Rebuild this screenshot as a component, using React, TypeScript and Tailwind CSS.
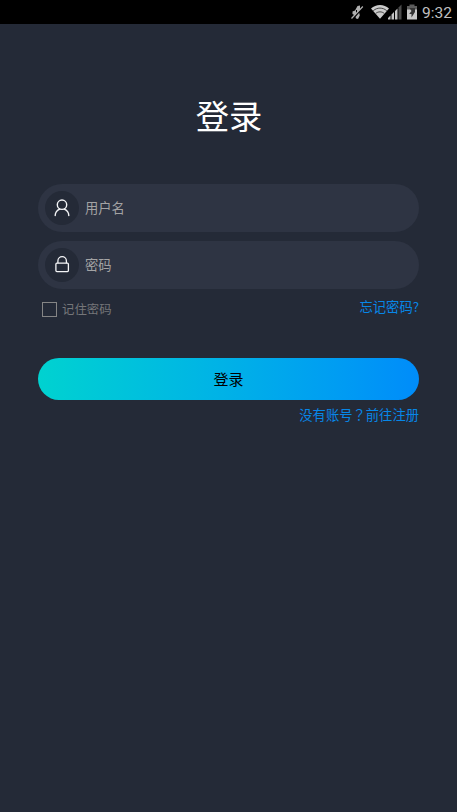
import React, { useState } from 'react';

interface FieldProps {
    icon: React.ReactNode;
    type: string;
    placeholder: string;
    value: string;
    onChange: (value: string) => void;
}

const UserIcon = () => (
    <svg width="34" height="34" viewBox="0 0 34 34" fill="none" stroke="#f4f5f7" strokeWidth="1.4" strokeLinecap="round">
        <circle cx="17" cy="13.7" r="4.7" />
        <path d="M10.2 24.6c.1-3.100 1.900-5.400 4.600-6.400M23.800 24.600c-.1-3.100-1.900-5.400-4.600-6.400" />
    </svg>
);

const LockIcon = () => (
    <svg width="34" height="34" viewBox="0 0 34 34" fill="none" stroke="#f4f5f7" strokeWidth="1.3">
        <rect x="10.9" y="15.200" width="12.500" height="8.400" rx="1" />
        <path d="M12.900 15.200v-2.300a4.250 4.250 0 0 1 8.500 0v2.300" />
    </svg>
);

const StatusBar = () => (
    <div className="flex h-6 items-center justify-end bg-black pr-[5px]">
        {/* Muted ringer */}
        <svg className="mr-[6px]" width="15" height="18" viewBox="0 0 15 18" fill="none">
            <path d="M2.500 8.500 5 7.500 7.500 3l2.500-.5v4.500l-1 2 .8 3.500-1.800 3.500-2-.5-1-3-2.500-1.500z" fill="#b0b0b0" />
            <path d="M6.500 7v4" stroke="#000" strokeWidth="1" />
            <path d="M2.200 16.500 13 4.500" stroke="#000" strokeWidth="1.500" />
            <path d="M1.500 15.500 12.800 3.500" stroke="#b0b0b0" strokeWidth="1.200" />
        </svg>
        {/* Wifi */}
        <svg width="18" height="18" viewBox="0 0 18 18">
            <path d="M9 15.800 0 5.500C2.500 3.200 5.600 2 9 2s6.500 1.200 9 3.500z" fill="#cbcbcb" />
            <path d="M2.200 7.800c3.800-3.600 9.800-3.600 13.600 0M4.700 10.500c2.400-2.200 6.200-2.200 8.600 0" fill="none" stroke="#222" strokeWidth=".8" />
        </svg>
        {/* Cell signal */}
        <svg className="-ml-px mr-[5px]" width="14" height="18" viewBox="0 0 14 18">
            <path d="M0 16.500v-1.500l2.500-2.500v4zM3.500 16.500v-5L6 9v7.500zM7 16.500v-8.500L9.500 5.500v11z" fill="#c4c4c4" />
            <path d="M10.500 16.500v-12L13.500 1.500v15z" fill="#4c4c4c" />
        </svg>
        {/* Battery */}
        <svg className="mr-[5px]" width="10" height="18" viewBox="0 0 10 18">
            <path d="M0 3h2.500V1.500h5V3H10v4H0z" fill="#5c5c5c" />
            <path d="M0 6.500h10v10H0z" fill="#c8c8c8" />
            <path d="M2.500 5h5.500v4L4.500 14.500V11H2.200L4.500 8z" fill="#333" />
        </svg>
        <span className="mt-[2px] font-[Roboto,sans-serif] text-[15.500px] leading-6 text-[#c0c0c0]">9:32</span>
    </div>
);

const Field: React.FC<FieldProps> = ({ icon, type, placeholder, value, onChange }) => (
    <label className="flex h-12 items-center rounded-full bg-[#2e3443] pl-[7px] pr-5">
        <span className="flex size-[34px] shrink-0 items-center justify-center rounded-full bg-[#242a37]">{icon}</span>
        <input
            type={type}
            value={value}
            placeholder={placeholder}
            onChange={e => onChange(e.target.value)}
            className="ml-[6px] h-full min-w-0 flex-1 bg-transparent pb-[2px] text-[13.300px] text-white outline-none placeholder:text-[#a3a3a4]"
        />
    </label>
);

const App: React.FC = () => {
    const [username, setUsername] = useState('');
    const [password, setPassword] = useState('');
    const [remember, setRemember] = useState(false);

    return (
        <div className="min-h-screen bg-[#242a37] font-['Noto_Sans_CJK_SC',sans-serif]">
            <StatusBar />
            <form className="flex flex-col px-[38px]" onSubmit={e => e.preventDefault()}>
                <h1 className="mt-[66px] pl-px text-center text-[33.300px] leading-[50px] text-white">登录</h1>

                <div className="mt-[44px] flex flex-col gap-[9px]">
                    <Field icon={<UserIcon />} type="text" placeholder="用户名" value={username} onChange={setUsername} />
                    <Field icon={<LockIcon />} type="password" placeholder="密码" value={password} onChange={setPassword} />
                </div>

                <div className="mt-[8px] flex h-[24px] items-start justify-between">
                    <label className="mt-[2px] flex items-center pl-[4px] text-[12.400px] leading-5 text-[#757679]">
                        <input
                            type="checkbox"
                            checked={remember}
                            onChange={e => setRemember(e.target.checked)}
                            className="mr-[5px] size-[15px] appearance-none border border-[#858585] checked:bg-[#0090f8]"
                        />
                        记住密码
                    </label>
                    <a href="#" className="text-[13.300px] leading-5 text-[#0787e8]">忘记密码?</a>
                </div>

                <button
                    type="submit"
                    className="mt-[37px] h-[42px] rounded-full bg-linear-to-r from-[#00d2d0] to-[#008cfa] pb-[2px] text-[15px] leading-none text-black"
                >
                    登录
                </button>
                <a href="#" className="mt-[5px] self-end text-[13.300px] leading-5 text-[#0787e8]">
                    没有账号<span className="font-['Noto_Sans_CJK_TC',sans-serif]" lang="zh-TW">？</span>前往注册
                </a>
            </form>
        </div>
    );
};

export default App;
